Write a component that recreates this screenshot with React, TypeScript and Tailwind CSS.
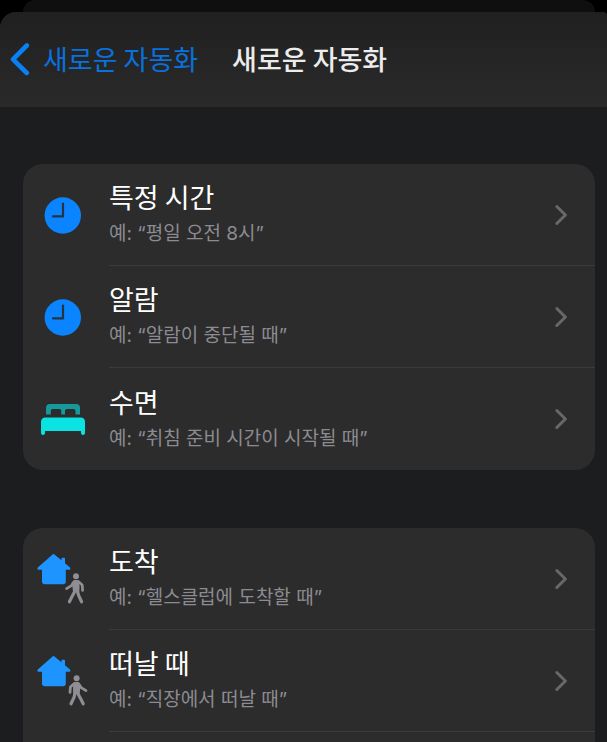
import React from "react";

type IconName = "clock" | "bed" | "arrive" | "leave";

type Trigger = {
  icon: IconName;
  title: string;
  example: string;
};

const timeTriggers: Trigger[] = [
  { icon: "clock", title: "특정 시간", example: "예: “평일 오전 8시”" },
  { icon: "clock", title: "알람", example: "예: “알람이 중단될 때”" },
  { icon: "bed", title: "수면", example: "예: “취침 준비 시간이 시작될 때”" },
];

const placeTriggers: Trigger[] = [
  { icon: "arrive", title: "도착", example: "예: “헬스클럽에 도착할 때”" },
  { icon: "leave", title: "떠날 때", example: "예: “직장에서 떠날 때”" },
];

const ClockIcon = () => (
  <svg width="56" height="56" viewBox="0 0 56 56" aria-hidden="true">
    <circle cx="25.8" cy="28.5" r="18.2" fill="#0a84ff" />
    <path
      d="M26 16.6V29.4H16"
      fill="none"
      stroke="#263340"
      strokeWidth="2.2"
      strokeLinecap="round"
      strokeLinejoin="round"
    />
  </svg>
);

const BedIcon = () => (
  <svg width="56" height="56" viewBox="0 1 56 56" aria-hidden="true">
    <path
      d="M9 24.5V18Q9 14 13 14H39Q43 14 43 18V24.5H38.5V21Q38.5 19 36.5 19H30Q28 19 28 21V24.5H24.3V21Q24.3 19 22.3 19H15.8Q13.8 19 13.8 21V24.5Z"
      fill="#16999b"
    />
    <path
      d="M4 43V32Q4 27.5 8.5 27.5H43.5Q48 27.5 48 32V43Q48 45 46 45Q44 45 44 43V41H8V43Q8 45 6 45Q4 45 4 43Z"
      fill="#0be3e3"
    />
  </svg>
);

const House = () => (
  <path
    d="M17.8 12L25.5 18.2V16.4Q25.5 15.8 26.2 15.8H28.3Q29 15.8 29 16.4V21.2L34 25.4Q35.2 27.7 33 27.8H29.8V39.5Q29.8 42.2 27 42.2H8.8Q6 42.2 6 39.5V27.8H2.8Q.4 27.7 1.8 25.4L16 13Q17 12 17.8 12Z"
    fill="#1e94ff"
  />
);

// Walking figure, drawn facing right; flipped when arriving.
const Walker = () => (
  <g fill="none" stroke="#8e8e93" strokeLinecap="round" strokeLinejoin="round">
    <circle cx="40.6" cy="34.2" r="3" fill="#8e8e93" stroke="none" />
    <path d="M38.8 39L42 39L43.4 42L42.8 48.6L38.2 49L38 44Z" fill="#8e8e93" strokeWidth="2" />
    <path d="M38 39.8L34.4 43L34 48.4" strokeWidth="2.8" />
    <path d="M42.6 39.8L45.2 43.6L50 46.6" strokeWidth="2.8" />
    <path d="M39.3 48.5L38 53.4L35 59.8" strokeWidth="3.2" />
    <path d="M41.4 48.5L44 53.4L47.2 59.8" strokeWidth="3.2" />
  </g>
);

const ArriveIcon = () => (
  <svg width="56" height="64" viewBox="1 5 56 64" aria-hidden="true">
    <House />
    <g transform="translate(80.6 0) scale(-1 1)">
      <Walker />
    </g>
  </svg>
);

const LeaveIcon = () => (
  <svg width="56" height="64" viewBox="1 5 56 64" aria-hidden="true">
    <House />
    <Walker />
  </svg>
);

const icons: Record<IconName, React.ComponentType> = {
  clock: ClockIcon,
  bed: BedIcon,
  arrive: ArriveIcon,
  leave: LeaveIcon,
};

const TriggerRow = ({ trigger, divider }: { trigger: Trigger; divider: boolean }) => {
  const Icon = icons[trigger.icon];
  return (
    <li>
      <button type="button" className="flex h-[102px] w-full items-stretch pl-[14px] text-left">
        <span className="flex w-[72px] shrink-0 items-center">
          <Icon />
        </span>
        <span
          className={
            divider
              ? "flex flex-1 items-center justify-between border-b border-[#3b3b3d] pr-6"
              : "flex flex-1 items-center justify-between pr-6"
          }
        >
          <span className="flex flex-col gap-[3px]">
            <span className="text-[27px] leading-9 text-white">{trigger.title}</span>
            <span className="font-[Inter,'Noto_Sans_CJK_KR',sans-serif] text-[19px] leading-8 text-[#8b8b91]">
              {trigger.example}
            </span>
          </span>
          <svg width="20" height="24" viewBox="0 0 20 24" aria-hidden="true">
            <path
              d="M5.8 3.5L14.4 12L5.8 20.5"
              fill="none"
              stroke="#68686c"
              strokeWidth="3"
              strokeLinecap="round"
              strokeLinejoin="round"
            />
          </svg>
        </span>
      </button>
    </li>
  );
};

const App = () => {
  return (
    <div className="flex min-h-screen flex-col bg-black font-['Noto_Sans_CJK_KR','Noto_Sans',sans-serif]">
      <div className="mr-3 ml-[23px] h-3 rounded-t-2xl bg-[#0f0f0f]"></div>
      <div className="flex flex-1 flex-col rounded-tl-2xl rounded-tr bg-[#1c1d1f]">
        <header className="flex h-[95px] items-center gap-[34px] rounded-tl-2xl rounded-tr bg-linear-to-b from-[#202020] to-[#2a2a2a] pb-0.5 pl-2">
          <button type="button" className="flex items-center gap-3 text-[27px] leading-9 text-[#0a70dc]">
            <svg width="23" height="34" viewBox="0 0 23 34" aria-hidden="true">
              <path
                d="M18.8 3.5L5 17.3L18.8 31"
                fill="none"
                stroke="#0a80f5"
                strokeWidth="4.6"
                strokeLinecap="round"
                strokeLinejoin="round"
              />
            </svg>
            새로운 자동화
          </button>
          <h1 className="text-[27px] leading-9 font-medium text-[#ececec]">새로운 자동화</h1>
        </header>
        <main className="flex flex-1 flex-col gap-[58px] pt-[57px] pr-3 pl-[23px]">
          <ul className="rounded-[20px] bg-[#2c2c2c]">
            {timeTriggers.map((trigger, i) => (
              <TriggerRow
                key={trigger.title}
                trigger={trigger}
                divider={i < timeTriggers.length - 1}
              />
            ))}
          </ul>
          <ul className="flex-1 rounded-t-[20px] bg-[#2c2c2c]">
            {placeTriggers.map((trigger) => (
              <TriggerRow key={trigger.title} trigger={trigger} divider />
            ))}
          </ul>
        </main>
      </div>
    </div>
  );
};

export default App;
